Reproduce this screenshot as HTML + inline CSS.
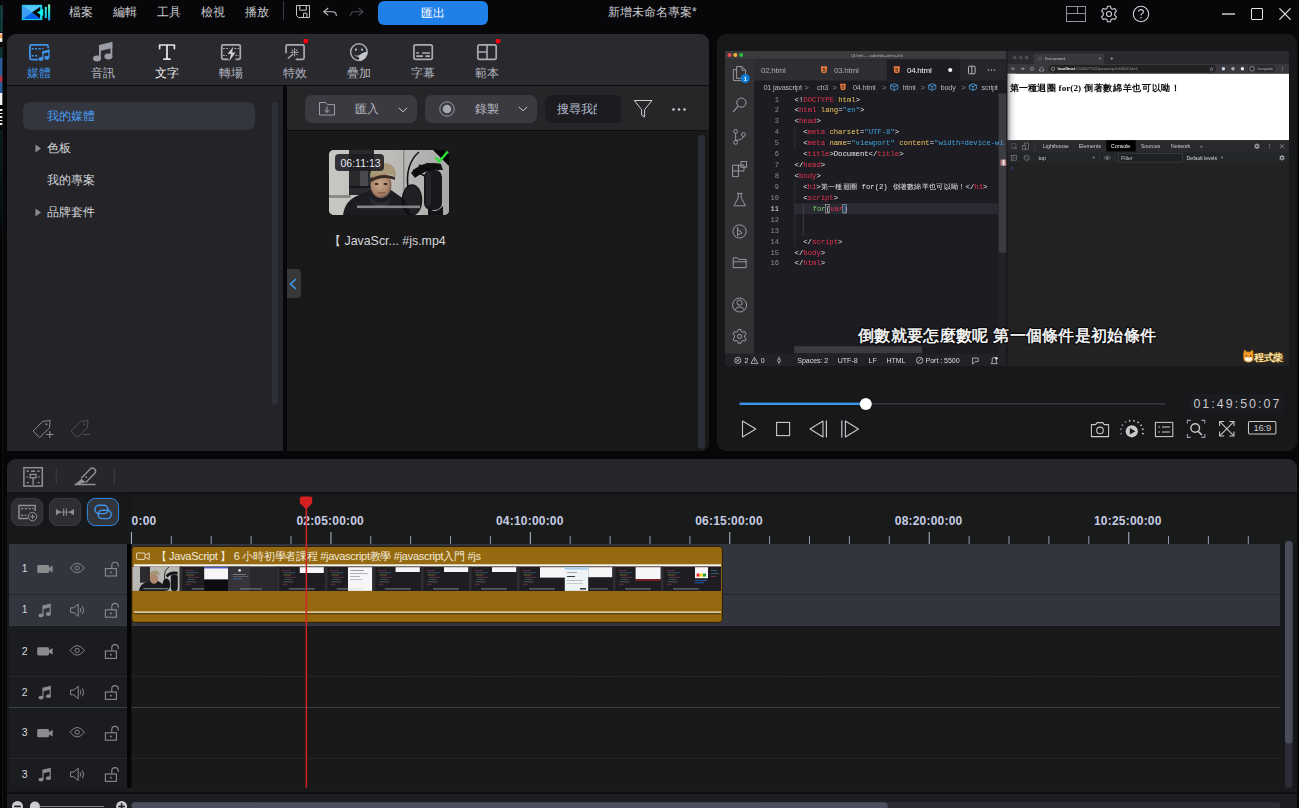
<!DOCTYPE html>
<html lang="zh-Hant">
<head>
<meta charset="utf-8">
<title>PowerDirector</title>
<style>
*{box-sizing:border-box;margin:0;padding:0}
html,body{width:1299px;height:808px;overflow:hidden;background:#070709}
body{position:relative;font-family:"Liberation Sans",sans-serif;color:#c8c9cf;font-size:12px}
.abs,.abs>*{position:absolute}
div,span,svg{position:absolute}
.t{white-space:nowrap;line-height:1}
/* panels */
#lp{left:7px;top:34px;width:702px;height:417px;background:#26262a;border-radius:9px 9px 8px 0;overflow:hidden}
#rp{left:717px;top:34px;width:580px;height:417px;background:#171819;border-radius:9px;overflow:hidden}
#tl{left:7px;top:459px;width:1290px;height:349px;background:#1a1a1a;border-radius:9px 9px 0 0;overflow:hidden}
</style>
</head>
<body>
<!-- left desktop sliver -->
<div id="sliver" style="left:0;top:0;width:3px;height:808px;background:#020203;overflow:hidden">
  <div style="left:0;top:5px;width:3px;height:27px;background:linear-gradient(90deg,#0a2c2e,#0f4a48 70%,#1d5a78)"></div>
  <div style="left:2px;top:9px;width:1px;height:11px;background:#3a7ac0"></div>
  <div style="left:0;top:33px;width:3px;height:9px;background:linear-gradient(180deg,#f0e8e0,#e88a28 45%,#fff 70%,#d8d8d8)"></div>
  <div style="left:0;top:47px;width:3px;height:11px;background:#0a3532"></div>
  <div style="left:0;top:58px;width:3px;height:35px;background:#2a5c9a"></div>
  <div style="left:0;top:71px;width:3px;height:15px;background:linear-gradient(165deg,#2a5c9a 25%,#c63038 45%,#c63038 62%,#2a5c9a 80%)"></div>
  <div style="left:0;top:93px;width:3px;height:12px;background:#f4f4f4"></div>
  <div style="left:0;top:109px;width:3px;height:18px;background:repeating-linear-gradient(180deg,#f0f0f0 0 1.6px,#0a0a0a 1.6px 3.6px)"></div>
  <div style="left:0;top:130px;width:3px;height:110px;background:linear-gradient(180deg,#071c1b,#041110 70%,#020203)"></div>
</div>
<div style="left:2.4px;top:0;width:1px;height:808px;background:#18181a;opacity:0.7"></div>

<!-- ============ TOP BAR ============ -->
<div id="topbar" style="left:0;top:0;width:1299px;height:34px">
  <!-- logo -->
  <svg style="left:20px;top:3px" width="32" height="19" viewBox="20 3 32 19">
    <defs>
      <linearGradient id="lg1" x1="0" y1="0" x2="0" y2="1"><stop offset="0" stop-color="#7ff0a0"/><stop offset="0.5" stop-color="#22d6d0"/><stop offset="1" stop-color="#1a9af0"/></linearGradient>
      <linearGradient id="lg2" x1="0" y1="0" x2="0" y2="1"><stop offset="0" stop-color="#2ff0d8"/><stop offset="1" stop-color="#14c0f0"/></linearGradient>
    </defs>
    <rect x="21.8" y="4.8" width="20.4" height="15.3" fill="#1ccdea"/>
    <path d="M22.4 5.4 H41.6 L32 12.4Z" fill="#55c8f7"/>
    <path d="M22.4 5.4 L32 12.4 L22.4 19.2Z" fill="#3f9cf4"/>
    <path d="M23 19 L32 12.6 L41.4 19Z" fill="#0560ec"/>
    <path d="M32 12.5 L40.2 6.8 V18.4Z" fill="#050507"/>
    <path d="M37 12.5 L43.2 8.8 V16.2Z" fill="#06f2ee"/>
    <path d="M40.2 15 L42.2 16 V19.4 H40.2Z" fill="#22d8e8"/>
    <rect x="44.8" y="6.8" width="2" height="11.2" fill="url(#lg2)"/>
    <rect x="48" y="4.4" width="2.2" height="16" fill="url(#lg1)"/>
  </svg>
  <!-- save -->
  <svg style="left:295px;top:4px" width="16" height="15" viewBox="295 4 16 15">
    <path d="M296.5 5.5 H309.5 V17.5 H298.5 L296.5 15.5Z" fill="none" stroke="#c4c4c6" stroke-width="1"/>
    <path d="M299.8 5.5 V10.2 H306.3 V5.5" fill="none" stroke="#c4c4c6" stroke-width="1"/>
    <path d="M303.5 17.5 V13.2 H306.9 V17.5" fill="none" stroke="#c4c4c6" stroke-width="1"/>
  </svg>
  <!-- undo -->
  <svg style="left:322px;top:6px" width="16" height="12" viewBox="322 6 16 12">
    <path d="M328.2 8 L323.8 11.7 L328.2 15.4 M323.8 11.7 H332.5 Q336.4 11.7 336.4 16" fill="none" stroke="#c0c0c3" stroke-width="1.1"/>
  </svg>
  <!-- redo -->
  <svg style="left:349px;top:6px" width="16" height="12" viewBox="349 6 16 12">
    <path d="M358.6 8 L363 11.7 L358.6 15.4 M363 11.7 H354.3 Q350.4 11.7 350.4 16" fill="none" stroke="#4a4a4e" stroke-width="1.1"/>
  </svg>
  <!-- layout -->
  <svg style="left:1065px;top:5px" width="22" height="18" viewBox="1065 5 22 18">
    <rect x="1066.5" y="6.5" width="19" height="15" fill="none" stroke="#8f9097" stroke-width="1"/>
    <path d="M1066.5 13.5 H1085.5 M1077.5 6.5 V13.5" stroke="#8f9097" stroke-width="1" fill="none"/>
  </svg>
  <!-- gear -->
  <svg style="left:1100px;top:5px" width="18" height="18" viewBox="-9 -9 18 18">
    <path id="gearp" fill="none" stroke="#d2d2d6" stroke-width="1.1" stroke-linejoin="round" d="M-1.5 -7.8 H1.5 L2 -5.6 L3.7 -4.7 L5.9 -5.5 L7.4 -2.9 L5.8 -1.3 V1.3 L7.4 2.9 L5.9 5.5 L3.7 4.7 L2 5.6 L1.5 7.8 H-1.5 L-2 5.6 L-3.7 4.7 L-5.9 5.5 L-7.4 2.9 L-5.8 1.3 V-1.3 L-7.4 -2.9 L-5.9 -5.5 L-3.7 -4.7 L-2 -5.6Z"/>
    <circle cx="0" cy="0" r="2.5" fill="none" stroke="#d2d2d6" stroke-width="1.1"/>
  </svg>
  <!-- help -->
  <svg style="left:1132px;top:5px" width="18" height="18" viewBox="-9 -9 18 18">
    <circle cx="0" cy="0" r="7.7" fill="none" stroke="#d2d2d6" stroke-width="1.1"/>
    <path d="M-2.4 -2.2 Q-2.4 -4.4 0 -4.4 Q2.4 -4.4 2.4 -2.3 Q2.4 -0.9 0.9 -0.2 Q0 0.3 0 1.6" fill="none" stroke="#d2d2d6" stroke-width="1.1"/>
    <circle cx="0" cy="3.7" r="0.8" fill="#d2d2d6"/>
  </svg>
  <!-- window controls -->
  <div style="left:1222px;top:13px;width:13px;height:1.5px;background:#9a9a9c"></div>
  <div style="left:1251px;top:8px;width:12px;height:12px;border:1.3px solid #e6e6e6;border-radius:1px"></div>
  <svg style="left:1278px;top:7px" width="14" height="14" viewBox="0 0 14 14"><path d="M1.4 1.4 L12.6 12.6 M12.6 1.4 L1.4 12.6" stroke="#e6e6e6" stroke-width="1.2"/></svg>
  <div class="t" style="left:69px;top:6px;font-size:12px;color:#c9cad0">檔案</div>
  <div class="t" style="left:113px;top:6px;font-size:12px;color:#c9cad0">編輯</div>
  <div class="t" style="left:157px;top:6px;font-size:12px;color:#c9cad0">工具</div>
  <div class="t" style="left:201px;top:6px;font-size:12px;color:#c9cad0">檢視</div>
  <div class="t" style="left:245px;top:6px;font-size:12px;color:#c9cad0">播放</div>
  <div style="left:283px;top:1px;width:1px;height:19px;background:#3a3b40"></div>
  <div id="export" style="left:378px;top:1px;width:110px;height:24px;border-radius:6px;background:#1f80e8"></div>
  <div class="t" style="left:421px;top:6.5px;font-size:12px;color:#fff">匯出</div>
  <div class="t" style="left:608px;top:6px;font-size:12px;color:#c9cad0">新增未命名專案*</div>
</div>

<!-- ============ LEFT PANEL ============ -->
<div id="lp">
  <!-- tab row -->
  <div id="tabs" style="left:0;top:0;width:702px;height:52px;background:#2a2a2e"></div>
  <!-- tab: media (active) ; coordinates are panel-relative: panel x0=7,y0=34 -->
  <svg style="left:20px;top:8px" width="24" height="22" viewBox="27 42 24 22">
    <path d="M37.2 59.6 H31.4 Q29.9 59.6 29.9 58.1 V46.3 Q29.9 44.8 31.4 44.8 H46.6 Q48.1 44.8 48.1 46.3 V47.6" fill="none" stroke="#3d95ea" stroke-width="1.8" stroke-linecap="round"/>
    <path d="M31.6 48.7 H43.4" stroke="#3d95ea" stroke-width="1.4" stroke-dasharray="2.2 1.3" fill="none"/>
    <path d="M31.6 55.7 H38.6" stroke="#3d95ea" stroke-width="1.4" stroke-dasharray="2.2 1.3" fill="none"/>
    <path d="M42.9 58.6 V52 L48.9 50.4 V57.4" fill="none" stroke="#3d95ea" stroke-width="1.3"/>
    <path d="M42.25 51.4 L49.55 49.5 V52.1 L42.25 54Z" fill="#3d95ea"/>
    <ellipse cx="40.9" cy="59" rx="2.5" ry="2.1" fill="#3d95ea"/>
    <ellipse cx="46.9" cy="57.8" rx="2.5" ry="2.1" fill="#3d95ea"/>
  </svg>
  <div class="t" style="left:20px;top:33px;width:24px;text-align:center;font-size:12px;color:#3d95ea">媒體</div>
  <!-- tab: audio -->
  <svg style="left:84px;top:6px" width="24" height="24" viewBox="91 40 24 24">
    <path d="M99 45.2 L112.3 42 V57.2 H110.4 V47.6 L100.9 49.8 V59.4 H99Z" fill="#9a9ca6"/>
    <path d="M99 45.2 L112.3 42 V48 L99 51.2Z" fill="#9a9ca6"/>
    <ellipse cx="97" cy="58.6" rx="4" ry="3" fill="#9a9ca6"/>
    <ellipse cx="108.4" cy="56.4" rx="4" ry="3" fill="#9a9ca6"/>
  </svg>
  <div class="t" style="left:84px;top:33px;width:24px;text-align:center;font-size:12px;color:#b4b6c0">音訊</div>
  <!-- tab: text -->
  <svg style="left:148px;top:8px" width="24" height="22" viewBox="155 42 24 22">
    <path d="M159.6 48.6 V45 H174.4 V48.6" fill="none" stroke="#e4e4e8" stroke-width="1.7" stroke-linejoin="round" stroke-linecap="round"/>
    <path d="M167 45 V59.2" stroke="#e4e4e8" stroke-width="1.8" fill="none"/>
    <path d="M164 59.2 H170" stroke="#e4e4e8" stroke-width="1.8" stroke-linecap="round" fill="none"/>
  </svg>
  <div class="t" style="left:148px;top:33px;width:24px;text-align:center;font-size:12px;color:#f2f2f4">文字</div>
  <!-- tab: transition -->
  <svg style="left:212px;top:8px" width="24" height="22" viewBox="219 42 24 22">
    <path d="M228.5 59.3 H223.2 Q221.7 59.3 221.7 57.8 V46.3 Q221.7 44.8 223.2 44.8 H238.8 Q240.3 44.8 240.3 46.3 V57.8 Q240.3 59.3 238.8 59.3 H235.5" fill="none" stroke="#a9abb5" stroke-width="1.7"/>
    <path d="M223 48.5 H229.5 M234.5 48.5 H239" stroke="#a9abb5" stroke-width="1.1" stroke-dasharray="1.8 1.3" fill="none"/>
    <path d="M223 55.5 H227 M235.5 55.5 H239" stroke="#a9abb5" stroke-width="1.1" stroke-dasharray="1.8 1.3" fill="none"/>
    <path d="M233.4 46.6 L227.6 54 H231 L229 61.6 L235.6 52.4 H232Z" fill="#c9cbd3"/>
  </svg>
  <div class="t" style="left:212px;top:33px;width:24px;text-align:center;font-size:12px;color:#b4b6c0">轉場</div>
  <!-- tab: effects -->
  <svg style="left:276px;top:4px" width="26" height="26" viewBox="283 38 26 26">
    <path d="M286 52.5 V46.3 Q286 44.8 287.5 44.8 H302.6 Q304.1 44.8 304.1 46.3 V57.8 Q304.1 59.3 302.6 59.3 H296.3" fill="none" stroke="#a9abb5" stroke-width="1.7" stroke-linecap="round"/>
    <path d="M288.3 58.3 L292.8 54.2" stroke="#a9abb5" stroke-width="1.5" stroke-linecap="round"/>
    <path d="M294.6 48.6 V50.2 M294.6 54.4 V56 M291 52.3 H292.6 M296.6 52.3 H298.2 M292 49.7 L293.1 50.8 M297.2 49.7 L296.1 50.8 M297.2 54.9 L296.1 53.8" stroke="#c6c8d0" stroke-width="0.9" stroke-linecap="round"/>
    <circle cx="294.6" cy="52.3" r="1.1" fill="#c6c8d0"/>
    <rect x="303.6" y="39" width="4.4" height="4.2" rx="1.2" fill="#fb0007"/>
  </svg>
  <div class="t" style="left:276px;top:33px;width:24px;text-align:center;font-size:12px;color:#b4b6c0">特效</div>
  <!-- tab: overlay -->
  <svg style="left:340px;top:6px" width="24" height="24" viewBox="347 40 24 24">
    <circle cx="358.9" cy="52.1" r="8.3" fill="none" stroke="#a9abb5" stroke-width="1.5"/>
    <path d="M353.4 54.8 Q357.6 57.4 361.6 53.6 Q364.6 51.6 367.4 51.4 Q367.4 57.4 361.2 60.4 Q359.6 61 358.6 60.6 Q360.2 58 358.2 56.8 Q355.4 56.8 353.4 54.8Z" fill="#c3c5cf"/>
    <rect x="355" y="48.6" width="1.8" height="2" fill="#c3c5cf"/>
    <rect x="361" y="48.6" width="1.8" height="2" fill="#c3c5cf"/>
  </svg>
  <div class="t" style="left:340px;top:33px;width:24px;text-align:center;font-size:12px;color:#b4b6c0">疊加</div>
  <!-- tab: subtitle -->
  <svg style="left:404px;top:8px" width="24" height="22" viewBox="411 42 24 22">
    <rect x="413.9" y="44.8" width="18.4" height="14.5" rx="1.8" fill="none" stroke="#a9abb5" stroke-width="1.7"/>
    <path d="M416.2 53 H419 M422 53 H430 M416.2 56.1 H423 M425.4 56.1 H430" stroke="#a9abb5" stroke-width="1.7" fill="none"/>
  </svg>
  <div class="t" style="left:404px;top:33px;width:24px;text-align:center;font-size:12px;color:#b4b6c0">字幕</div>
  <!-- tab: template -->
  <svg style="left:468px;top:4px" width="26" height="26" viewBox="475 38 26 26">
    <rect x="477.8" y="44.8" width="18.4" height="14.5" rx="1.8" fill="none" stroke="#a9abb5" stroke-width="1.7"/>
    <path d="M487 44.8 V59.3 M477.8 52 H487" stroke="#a9abb5" stroke-width="1.6" fill="none"/>
    <rect x="495.8" y="39" width="4.4" height="4.2" rx="1.2" fill="#fb0007"/>
  </svg>
  <div class="t" style="left:468px;top:33px;width:24px;text-align:center;font-size:12px;color:#b4b6c0">範本</div>
  <div style="left:0;top:51.3px;width:702px;height:1.5px;background:#0b0b0d"></div>
  <!-- tree pane -->
  <div id="tree" style="left:0;top:52px;width:276px;height:366px;background:#242428"></div>
  <div style="left:16px;top:68px;width:232px;height:28px;border-radius:7px;background:#33353f"></div>
  <div class="t" style="left:40px;top:76px;font-size:12px;color:#4a9ff5">我的媒體</div>
  <div class="t" style="left:40px;top:108px;font-size:12px;color:#d4d5da">色板</div>
  <div class="t" style="left:40px;top:140px;font-size:12px;color:#d4d5da">我的專案</div>
  <div class="t" style="left:40px;top:172px;font-size:12px;color:#d4d5da">品牌套件</div>
  <svg style="left:28px;top:110px" width="7" height="9" viewBox="0 0 7 9"><path d="M0.5 0.5 L6 4.5 L0.5 8.5Z" fill="#8a8b92"/></svg>
  <svg style="left:28px;top:174px" width="7" height="9" viewBox="0 0 7 9"><path d="M0.5 0.5 L6 4.5 L0.5 8.5Z" fill="#8a8b92"/></svg>
  <div style="left:264.7px;top:68px;width:6.8px;height:303px;border-radius:3.4px;background:#2d2f39"></div>
  <!-- tag icons (page coords -> panel coords via viewBox) -->
  <svg style="left:24px;top:384px" width="62" height="22" viewBox="31 418 62 22">
    <path d="M33.2 431 L42.6 421.5 L50.1 420.4 L49.5 427.9 L39.6 437.6 Z" fill="none" stroke="#8a8a8d" stroke-width="1" stroke-linejoin="round"/>
    <circle cx="46.4" cy="424.2" r="0.95" fill="#8a8a8d"/>
    <path d="M46.2 434.5 H53.4 M49.8 430.9 V438.1" stroke="#8a8a8d" stroke-width="1.1"/>
    <path d="M71.1 431 L80.5 421.5 L88 420.4 L87.4 427.9 L77.5 437.6 Z" fill="none" stroke="#505054" stroke-width="1" stroke-linejoin="round"/>
    <circle cx="84.3" cy="424.2" r="0.95" fill="#505054"/>
    <path d="M83.2 434.5 H90.3" stroke="#505054" stroke-width="1"/>
  </svg>
  <!-- divider -->
  <div style="left:276px;top:52px;width:4px;height:366px;background:#070709"></div>
  <!-- content pane -->
  <div id="ctool" style="left:280px;top:52px;width:422px;height:45px;background:#262629"></div>
  <div style="left:280px;top:96.4px;width:422px;height:1.2px;background:#0d0d0f"></div>
  <div id="cbody" style="left:280px;top:97px;width:422px;height:321px;background:#191919"></div>
  <div id="btn-import" style="left:298px;top:61px;width:112px;height:28px;border-radius:7px;background:#3a3a40"></div>
  <svg style="left:311px;top:67px" width="18" height="16" viewBox="318 101 18 16">
    <path d="M319.5 115 V102.5 H325.6 L327.3 104.6 H334.5 V115Z" fill="none" stroke="#9b9ca5" stroke-width="1"/>
    <path d="M327 106.6 V112.3 M324.4 109.9 L327 112.4 L329.6 109.9" fill="none" stroke="#a4a5ae" stroke-width="1"/>
  </svg>
  <div class="t" style="left:348px;top:69px;font-size:12px;color:#b5b6bd">匯入</div>
  <svg style="left:391px;top:72.6px" width="10" height="6" viewBox="0 0 10 6"><path d="M0.8 0.8 L5 4.8 L9.2 0.8" fill="none" stroke="#c6c6ca" stroke-width="1"/></svg>
  <div id="btn-rec" style="left:418px;top:61px;width:112px;height:28px;border-radius:7px;background:#3a3a40"></div>
  <svg style="left:432px;top:67px" width="16" height="16" viewBox="-8 -8 16 16"><circle r="7.2" fill="none" stroke="#9fa0aa" stroke-width="0.9"/><circle r="4.3" fill="#a4a6b0"/></svg>
  <div class="t" style="left:468px;top:69px;font-size:12px;color:#b5b6bd">錄製</div>
  <svg style="left:511px;top:72.4px" width="10" height="6" viewBox="0 0 10 6"><path d="M0.8 0.8 L5 4.8 L9.2 0.8" fill="none" stroke="#c6c6ca" stroke-width="1"/></svg>
  <div id="search" style="left:538px;top:61px;width:76px;height:28px;border-radius:8px 4px 4px 8px;background:#1b1b20;overflow:hidden"><div class="t" style="left:12px;top:8px;font-size:12px;color:#b9bfcf;width:40px;overflow:hidden">搜尋我的媒體</div></div>
  <svg style="left:626px;top:65px" width="20" height="20" viewBox="633 99 20 20">
    <path d="M634.3 100.5 H652 L644.6 109.6 V117 L641.6 115 V109.6Z" fill="none" stroke="#cfcfd2" stroke-width="1"/>
  </svg>
  <svg style="left:664px;top:73px" width="16" height="5" viewBox="671 107 16 5"><circle cx="673.5" cy="109.5" r="1.3" fill="#c8c8cc"/><circle cx="679" cy="109.5" r="1.3" fill="#c8c8cc"/><circle cx="684.5" cy="109.5" r="1.3" fill="#c8c8cc"/></svg>
  <!-- scrollbar -->
  <div style="left:690.5px;top:101px;width:7.2px;height:314px;border-radius:3.6px;background:#2a2c36"></div>
  <!-- collapse handle -->
  <div style="left:280px;top:235px;width:14px;height:29px;border-radius:0 4px 4px 0;background:#383838"></div>
  <svg style="left:282px;top:244px" width="9" height="12" viewBox="0 0 9 12"><path d="M7 1 L1.5 6 L7 11" fill="none" stroke="#3d9ff5" stroke-width="1.5"/></svg>
  <!-- thumbnail -->
  <div id="thumb" style="left:322px;top:116px;width:120px;height:65px;border-radius:5px;background:#bdbcb8;overflow:hidden">
    <svg style="left:0;top:0" width="120" height="65" viewBox="0 0 120 65">
      <defs>
        <linearGradient id="wall" x1="0" y1="0" x2="1" y2="0"><stop offset="0" stop-color="#c8c7c4"/><stop offset="0.5" stop-color="#bdbcb9"/><stop offset="1" stop-color="#a9a9a8"/></linearGradient>
        <radialGradient id="face" cx="0.45" cy="0.45" r="0.6"><stop offset="0" stop-color="#c7a48c"/><stop offset="0.7" stop-color="#a98468"/><stop offset="1" stop-color="#6b5040"/></radialGradient>
      </defs>
      <rect width="120" height="65" fill="url(#wall)"/>
      <rect x="20" y="0" width="25" height="45" fill="#2a2a2c"/>
      <rect x="31" y="20" width="8" height="17" fill="#4a4b4e"/>
      <rect x="20" y="36" width="25" height="2" fill="#16161a"/>
      <rect x="0" y="45" width="22" height="3" fill="#8c8b88"/>
      <rect x="74" y="0" width="1.5" height="40" fill="#8a8a8a"/>
      <!-- body -->
      <path d="M14 65 Q16 50 30 45 L42 40 H62 L72 47 Q80 52 82 65Z" fill="#1c1d22"/>
      <path d="M40 47 Q52 58 62 47 L60 54 Q52 60 43 54Z" fill="#2b2c33"/>
      <!-- head -->
      <ellipse cx="52" cy="35" rx="10.5" ry="13" fill="url(#face)"/>
      <path d="M41 28 Q41 13 54 13 Q66 13 67 24 L67 27 Q55 20 41 28Z" fill="#a89978"/>
      <path d="M42 29 Q52 22 66 27 L66 30 Q54 25 42 32Z" fill="#3a2c22"/>
      <ellipse cx="47.5" cy="34" rx="2" ry="1" fill="#2c1d16"/>
      <ellipse cx="56.5" cy="34" rx="2" ry="1" fill="#2c1d16"/>
      <path d="M49 42.5 Q52 44 56 42.2" stroke="#7a4a3c" stroke-width="1.2" fill="none"/>
      <!-- pop filter -->
      <ellipse cx="83" cy="50" rx="9.5" ry="15" fill="#15161a" stroke="#0b0b0d" stroke-width="1.5" opacity="0.93"/>
      <path d="M79 38 Q76 14 90 2" stroke="#121214" stroke-width="1.6" fill="none"/>
      <!-- mic -->
      <path d="M82 23 Q92 10 112 14 L114 20 Q96 18 86 28Z" fill="#111114"/>
      <path d="M84 20 L96 26 M90 15 L104 22 M98 13 L110 20 M86 26 L110 14" stroke="#0c0c0e" stroke-width="1.4" fill="none"/>
      <rect x="95" y="20" width="18" height="40" rx="7" fill="#17181c"/>
      <rect x="97" y="22" width="5" height="34" rx="2.5" fill="#24262c"/>
      <path d="M99 56 Q105 66 114 56 V65 H99Z" fill="#121316"/>
      <rect x="114" y="22" width="6" height="43" fill="#a7a8a8"/>
      <!-- subtitle strip -->
      <rect x="28" y="55.5" width="63" height="2.6" fill="#d8d8d8" opacity="0.55"/>
      <!-- corner + check -->
      <path d="M104 0 H120 V16Z" fill="#050506"/>
      <path d="M106.5 7.6 L110.4 11.4 L118.8 1.4" stroke="#2be03a" stroke-width="2.4" fill="none"/>
    </svg>
    <div style="left:6px;top:4px;width:49px;height:17px;border-radius:4px;background:rgba(28,29,33,0.88)"></div>
    <div class="t" style="left:11.5px;top:7.5px;font-size:10.5px;color:#e4e8f2">06:11:13</div>
  </div>
  <div class="t" style="left:322px;top:200.5px;font-size:12.4px;color:#d4d5da">【 JavaScr... #js.mp4</div>
</div>

<!-- ============ RIGHT PANEL (preview) ============ -->
<div id="rp">
<svg id="video" style="left:8px;top:17px" width="564" height="315" viewBox="725 51 564 315" font-family="Liberation Sans, sans-serif">
<defs>
<linearGradient id="pgsh" x1="0" y1="0" x2="1" y2="0"><stop offset="0" stop-color="#8d8d90"/><stop offset="0.5" stop-color="#e6e6e8"/><stop offset="1" stop-color="#ffffff"/></linearGradient>
<filter id="blur1" x="-5%" y="-5%" width="110%" height="110%"><feGaussianBlur stdDeviation="0.35"/></filter>
</defs>
<g filter="url(#blur1)">
<rect x="725" y="51" width="282" height="315" fill="#1f1f23"/>
<rect x="725" y="51" width="282" height="8.3" fill="#3a3a3d"/>
<circle cx="729.5" cy="55.1" r="2" fill="#ee4b4b"/>
<circle cx="735.3" cy="55.1" r="2" fill="#f5b02e"/>
<circle cx="741.2" cy="55.1" r="2" fill="#2fbf3f"/>
<text x="877" y="56.6" font-size="3.6" fill="#b8b8b8" text-anchor="middle">04.html — codeshiba-demo-ch3</text>
<rect x="725" y="59.3" width="29" height="294.5" fill="#333336"/>
<rect x="754" y="59.3" width="253" height="21.2" fill="#27272a"/>
<rect x="754" y="59.3" width="60.3" height="21.2" fill="#2e2e31"/>
<rect x="814.8" y="59.3" width="72" height="21.2" fill="#2e2e31"/>
<rect x="887.2" y="59.3" width="72.6" height="21.2" fill="#1f1f23"/>
<text x="761" y="72.8" font-size="8" fill="#a9a9ad" letter-spacing="-0.25">02.html</text>
<text x="834" y="72.8" font-size="8" fill="#a9a9ad" letter-spacing="-0.25">03.html</text>
<text x="907" y="72.8" font-size="8" fill="#f2f2f2" letter-spacing="-0.25">04.html</text>
<path d="M820.8 66.2 h6.4 l-0.6 6.2 l-2.6 0.9 l-2.6 -0.9 Z" fill="#e8783a"/><text x="824.0" y="71.8" font-size="5.4" font-weight="bold" fill="#2a2a2c" text-anchor="middle">5</text>
<path d="M893.6 66.2 h6.4 l-0.6 6.2 l-2.6 0.9 l-2.6 -0.9 Z" fill="#e8783a"/><text x="896.8" y="71.8" font-size="5.4" font-weight="bold" fill="#2a2a2c" text-anchor="middle">5</text>
<circle cx="950.2" cy="70" r="2.1" fill="#f4f4f4"/>
<rect x="968.5" y="66.2" width="6.6" height="7.6" rx="1" fill="none" stroke="#c8c8cc" stroke-width="0.9"/><path d="M971.8 66.2 V73.8" stroke="#c8c8cc" stroke-width="0.9"/>
<circle cx="988.4" cy="70" r="0.8" fill="#b0b0b4"/>
<circle cx="991.4" cy="70" r="0.8" fill="#b0b0b4"/>
<circle cx="994.4" cy="70" r="0.8" fill="#b0b0b4"/>
<text x="763.5" y="90" font-size="7.4" fill="#b4b4b8" letter-spacing="-0.25">01 javascript</text>
<text x="804.6" y="90" font-size="7.4" fill="#8a8a8e" letter-spacing="-0.25">&gt;</text>
<text x="817.0" y="90" font-size="7.4" fill="#b4b4b8" letter-spacing="-0.25">ch3</text>
<text x="832.6" y="90" font-size="7.4" fill="#8a8a8e" letter-spacing="-0.25">&gt;</text>
<text x="853.0" y="90" font-size="7.4" fill="#b4b4b8" letter-spacing="-0.25">04.html</text>
<text x="882.0" y="90" font-size="7.4" fill="#8a8a8e" letter-spacing="-0.25">&gt;</text>
<text x="902.5" y="90" font-size="7.4" fill="#b4b4b8" letter-spacing="-0.25">html</text>
<text x="920.8" y="90" font-size="7.4" fill="#8a8a8e" letter-spacing="-0.25">&gt;</text>
<text x="940.6" y="90" font-size="7.4" fill="#b4b4b8" letter-spacing="-0.25">body</text>
<text x="961.2" y="90" font-size="7.4" fill="#8a8a8e" letter-spacing="-0.25">&gt;</text>
<text x="981.5" y="90" font-size="7.4" fill="#b4b4b8" letter-spacing="-0.25">script</text>
<path d="M840.0 83.8 h5.8 l-0.5 5.6 l-2.3 0.8 l-2.3 -0.8 Z" fill="#e8783a"/><text x="842.9" y="88.8" font-size="4.9" font-weight="bold" fill="#2a2a2c" text-anchor="middle">5</text>
<path d="M890.6 85.2 l3.6 -1.5 l3.6 1.5 v3.6 l-3.6 1.6 l-3.6 -1.6 Z M890.6 85.2 l3.6 1.5 l3.6 -1.5 M894.2 86.7 v3.7" fill="none" stroke="#4aa0e0" stroke-width="0.8"/>
<path d="M928.6 85.2 l3.6 -1.5 l3.6 1.5 v3.6 l-3.6 1.6 l-3.6 -1.6 Z M928.6 85.2 l3.6 1.5 l3.6 -1.5 M932.2 86.7 v3.7" fill="none" stroke="#4aa0e0" stroke-width="0.8"/>
<path d="M969.4 85.2 l3.6 -1.5 l3.6 1.5 v3.6 l-3.6 1.6 l-3.6 -1.6 Z M969.4 85.2 l3.6 1.5 l3.6 -1.5 M973.0 86.7 v3.7" fill="none" stroke="#4aa0e0" stroke-width="0.8"/>
<rect x="794.5" y="203.4" width="204" height="10.6" fill="#2b2b33"/>
<rect x="998.6" y="93.5" width="8.4" height="260" fill="#232327"/>
<rect x="998.6" y="93.5" width="8.4" height="159" fill="#3a3a3f"/>
<rect x="1000.4" y="159.6" width="6.6" height="6" fill="#d08a8a" opacity="0.8"/><rect x="1002.6" y="159.6" width="2" height="6" fill="#e8e8e8"/>
<path d="M794.8 126 V148 M794.8 180 V246.5" stroke="#3d3d42" stroke-width="0.6"/>
<path d="M803.4 203 V235.5" stroke="#4a4a50" stroke-width="0.6"/>
<text x="779" y="101.5" font-size="7" fill="#8b8b90" text-anchor="end" font-family="Liberation Mono, monospace">1</text>
<text x="794.6" y="101.5" font-size="7.27" xml:space="preserve" font-family="Liberation Mono, monospace"><tspan fill="#e8e8ea">&lt;!</tspan><tspan fill="#e5304f">DOCTYPE</tspan><tspan fill="#ecc35f"> html</tspan><tspan fill="#e8e8ea">&gt;</tspan></text>
<text x="779" y="112.4" font-size="7" fill="#8b8b90" text-anchor="end" font-family="Liberation Mono, monospace">2</text>
<text x="794.6" y="112.4" font-size="7.27" xml:space="preserve" font-family="Liberation Mono, monospace"><tspan fill="#e8e8ea">&lt;</tspan><tspan fill="#e5304f">html</tspan><tspan fill="#ecc35f"> lang</tspan><tspan fill="#e8e8ea">=</tspan><tspan fill="#3fa3e0">"en"</tspan><tspan fill="#e8e8ea">&gt;</tspan></text>
<text x="779" y="123.4" font-size="7" fill="#8b8b90" text-anchor="end" font-family="Liberation Mono, monospace">3</text>
<text x="794.6" y="123.4" font-size="7.27" xml:space="preserve" font-family="Liberation Mono, monospace"><tspan fill="#e8e8ea">&lt;</tspan><tspan fill="#e5304f">head</tspan><tspan fill="#e8e8ea">&gt;</tspan></text>
<text x="779" y="134.3" font-size="7" fill="#8b8b90" text-anchor="end" font-family="Liberation Mono, monospace">4</text>
<text x="803.2" y="134.3" font-size="7.27" xml:space="preserve" font-family="Liberation Mono, monospace"><tspan fill="#e8e8ea">&lt;</tspan><tspan fill="#e5304f">meta</tspan><tspan fill="#ecc35f"> charset</tspan><tspan fill="#e8e8ea">=</tspan><tspan fill="#3fa3e0">"UTF-8"</tspan><tspan fill="#e8e8ea">&gt;</tspan></text>
<text x="779" y="145.2" font-size="7" fill="#8b8b90" text-anchor="end" font-family="Liberation Mono, monospace">5</text>
<text x="803.2" y="145.2" font-size="7.27" xml:space="preserve" font-family="Liberation Mono, monospace"><tspan fill="#e8e8ea">&lt;</tspan><tspan fill="#e5304f">meta</tspan><tspan fill="#ecc35f"> name</tspan><tspan fill="#e8e8ea">=</tspan><tspan fill="#3fa3e0">"viewport"</tspan><tspan fill="#ecc35f"> content</tspan><tspan fill="#e8e8ea">=</tspan><tspan fill="#3fa3e0">"width=device-wi</tspan></text>
<text x="779" y="156.2" font-size="7" fill="#8b8b90" text-anchor="end" font-family="Liberation Mono, monospace">6</text>
<text x="803.2" y="156.2" font-size="7.27" xml:space="preserve" font-family="Liberation Mono, monospace"><tspan fill="#e8e8ea">&lt;</tspan><tspan fill="#e5304f">title</tspan><tspan fill="#e8e8ea">&gt;Document&lt;/</tspan><tspan fill="#e5304f">title</tspan><tspan fill="#e8e8ea">&gt;</tspan></text>
<text x="779" y="167.1" font-size="7" fill="#8b8b90" text-anchor="end" font-family="Liberation Mono, monospace">7</text>
<text x="794.6" y="167.1" font-size="7.27" xml:space="preserve" font-family="Liberation Mono, monospace"><tspan fill="#e8e8ea">&lt;/</tspan><tspan fill="#e5304f">head</tspan><tspan fill="#e8e8ea">&gt;</tspan></text>
<text x="779" y="178.0" font-size="7" fill="#8b8b90" text-anchor="end" font-family="Liberation Mono, monospace">8</text>
<text x="794.6" y="178.0" font-size="7.27" xml:space="preserve" font-family="Liberation Mono, monospace"><tspan fill="#e8e8ea">&lt;</tspan><tspan fill="#e5304f">body</tspan><tspan fill="#e8e8ea">&gt;</tspan></text>
<text x="779" y="188.9" font-size="7" fill="#8b8b90" text-anchor="end" font-family="Liberation Mono, monospace">9</text>
<text x="803.2" y="188.9" font-size="7.27" xml:space="preserve" font-family="Liberation Mono, monospace"><tspan fill="#e8e8ea">&lt;</tspan><tspan fill="#e5304f">h1</tspan><tspan fill="#e8e8ea">&gt;</tspan></text>
<text x="779" y="199.9" font-size="7" fill="#8b8b90" text-anchor="end" font-family="Liberation Mono, monospace">10</text>
<text x="803.2" y="199.9" font-size="7.27" xml:space="preserve" font-family="Liberation Mono, monospace"><tspan fill="#e8e8ea">&lt;</tspan><tspan fill="#e5304f">script</tspan><tspan fill="#e8e8ea">&gt;</tspan></text>
<text x="779" y="210.8" font-size="7" fill="#e0e0e0" text-anchor="end" font-family="Liberation Mono, monospace">11</text>
<text x="812.6" y="210.8" font-size="7.27" xml:space="preserve" font-family="Liberation Mono, monospace"><tspan fill="#7fd068">for</tspan><tspan fill="#e8e8ea">(</tspan><tspan fill="#e5304f" font-style="italic">var</tspan><tspan fill="#e8e8ea">)</tspan></text>
<text x="779" y="221.7" font-size="7" fill="#8b8b90" text-anchor="end" font-family="Liberation Mono, monospace">12</text>
<text x="779" y="232.7" font-size="7" fill="#8b8b90" text-anchor="end" font-family="Liberation Mono, monospace">13</text>
<text x="779" y="243.6" font-size="7" fill="#8b8b90" text-anchor="end" font-family="Liberation Mono, monospace">14</text>
<text x="803.2" y="243.6" font-size="7.27" xml:space="preserve" font-family="Liberation Mono, monospace"><tspan fill="#e8e8ea">&lt;/</tspan><tspan fill="#e5304f">script</tspan><tspan fill="#e8e8ea">&gt;</tspan></text>
<text x="779" y="254.5" font-size="7" fill="#8b8b90" text-anchor="end" font-family="Liberation Mono, monospace">15</text>
<text x="794.6" y="254.5" font-size="7.27" xml:space="preserve" font-family="Liberation Mono, monospace"><tspan fill="#e8e8ea">&lt;/</tspan><tspan fill="#e5304f">body</tspan><tspan fill="#e8e8ea">&gt;</tspan></text>
<text x="779" y="265.4" font-size="7" fill="#8b8b90" text-anchor="end" font-family="Liberation Mono, monospace">16</text>
<text x="794.6" y="265.4" font-size="7.27" xml:space="preserve" font-family="Liberation Mono, monospace"><tspan fill="#e8e8ea">&lt;/</tspan><tspan fill="#e5304f">html</tspan><tspan fill="#e8e8ea">&gt;</tspan></text>
<text x="820.8" y="188.9" font-size="7.27" fill="#e8e8ea" textLength="36.2" lengthAdjust="spacing">第一種迴圈</text>
<text x="857.2" y="188.9" font-size="7.27" fill="#e8e8ea" font-family="Liberation Mono, monospace" xml:space="preserve"> for(2) </text>
<text x="892.6" y="188.9" font-size="7.27" fill="#e8e8ea" textLength="72.6" lengthAdjust="spacing">倒著數綿羊也可以呦！</text>
<text x="965.6" y="188.9" font-size="7.27" font-family="Liberation Mono, monospace" xml:space="preserve"><tspan fill="#e8e8ea">&lt;/</tspan><tspan fill="#e5304f">h1</tspan><tspan fill="#e8e8ea">&gt;</tspan></text>
<rect x="825.6" y="204.6" width="3.6" height="8.4" fill="none" stroke="#c8c8cc" stroke-width="0.5"/>
<rect x="842.8" y="204.6" width="3.6" height="8.4" fill="#1c4f80" fill-opacity="0.55" stroke="#c8c8cc" stroke-width="0.5"/>
<rect x="794.2" y="346.3" width="128" height="6.8" fill="#3b3b40"/>
<rect x="725" y="353.6" width="282" height="12.4" fill="#222225"/>
<text x="744.5" y="362.9" font-size="7.05" fill="#dcdcdf" letter-spacing="-0.05">2</text>
<text x="760.8" y="362.9" font-size="7.05" fill="#dcdcdf" letter-spacing="-0.05">0</text>
<text x="797.3" y="362.9" font-size="7.05" fill="#dcdcdf" letter-spacing="-0.05">Spaces: 2</text>
<text x="837.8" y="362.9" font-size="7.05" fill="#dcdcdf" letter-spacing="-0.05">UTF-8</text>
<text x="868.6" y="362.9" font-size="7.05" fill="#dcdcdf" letter-spacing="-0.05">LF</text>
<text x="886.4" y="362.9" font-size="7.05" fill="#dcdcdf" letter-spacing="-0.05">HTML</text>
<text x="925.6" y="362.9" font-size="7.05" fill="#dcdcdf" letter-spacing="-0.05">Port : 5500</text>
<circle cx="737.8" cy="360.4" r="3.1" fill="none" stroke="#dcdcdf" stroke-width="0.7"/><path d="M736.2 358.8 l3.2 3.2 m0 -3.2 l-3.2 3.2" stroke="#dcdcdf" stroke-width="0.7"/>
<path d="M754.4 357.2 l3.4 6.2 h-6.8 Z" fill="none" stroke="#dcdcdf" stroke-width="0.7"/><path d="M754.4 359.4 v2" stroke="#dcdcdf" stroke-width="0.7"/>
<circle cx="779" cy="360.4" r="1.5" fill="none" stroke="#dcdcdf" stroke-width="0.7"/><path d="M779 356.6 v2.3 m0 3 v2.3" stroke="#dcdcdf" stroke-width="0.7"/>
<circle cx="919.6" cy="360.4" r="3.2" fill="none" stroke="#dcdcdf" stroke-width="0.7"/><path d="M917.4 362.6 l4.4 -4.4" stroke="#dcdcdf" stroke-width="0.7"/>
<path d="M972.6 358 h5.6 v3.6 h-3 l-2.6 2.4 Z" fill="none" stroke="#dcdcdf" stroke-width="0.7"/>
<path d="M991.2 363.6 h6 l-1 -1.6 v-2.6 a2 2 0 0 0 -4 0 v2.6 Z" fill="none" stroke="#dcdcdf" stroke-width="0.7"/><circle cx="996.4" cy="358.2" r="1.3" fill="#dcdcdf"/>
<path d="M736.6 66.6 h5.4 l3.6 3.6 v8.2 h-9 Z M742 66.6 v3.6 h3.6" fill="none" stroke="#a2a2a6" stroke-width="0.9"/><path d="M736.6 69.6 h-3.2 v11 h8.6 v-2.2" fill="none" stroke="#a2a2a6" stroke-width="0.9"/>
<circle cx="745.2" cy="78.6" r="4.6" fill="#0b7ad8"/><text x="745.2" y="80.6" font-size="5.6" font-weight="bold" fill="#fff" text-anchor="middle">1</text>
<circle cx="741.4" cy="102.6" r="4.6" fill="none" stroke="#a2a2a6" stroke-width="1"/><path d="M738.2 106 l-5 5.8" stroke="#a2a2a6" stroke-width="1.1"/>
<circle cx="735.6" cy="131.4" r="1.9" fill="none" stroke="#a2a2a6" stroke-width="0.9"/><circle cx="735.6" cy="142.4" r="1.9" fill="none" stroke="#a2a2a6" stroke-width="0.9"/><circle cx="743.4" cy="134.6" r="1.9" fill="none" stroke="#a2a2a6" stroke-width="0.9"/><path d="M735.6 133.3 v7.2 M743.4 136.5 q0 3 -7.8 4" fill="none" stroke="#a2a2a6" stroke-width="0.9"/>
<path d="M732.6 165.2 h5.8 v5.8 h-5.8 Z M738.4 165.2 v5.8 h5.6 v-5.8 Z M732.6 171 v5.6 h5.8 v-5.6" fill="none" stroke="#a2a2a6" stroke-width="0.9"/><rect x="741" y="161.6" width="5.6" height="5.6" fill="none" stroke="#a2a2a6" stroke-width="0.9"/>
<path d="M737 193.4 h5.4 M738.2 193.4 v4.4 l-4.2 8 h11.4 l-4.2 -8 v-4.4" fill="none" stroke="#a2a2a6" stroke-width="0.9" stroke-linejoin="round"/>
<circle cx="739.6" cy="231.4" r="6.6" fill="none" stroke="#a2a2a6" stroke-width="0.9"/><path d="M737.6 227 v9 M737.6 229.6 l4.6 3.2 -4.6 2.4" fill="none" stroke="#a2a2a6" stroke-width="0.9"/>
<path d="M733.2 267.6 v-9.8 h4.2 l1.2 1.6 h7.6 v8.2 Z M733.2 261.8 h13" fill="none" stroke="#a2a2a6" stroke-width="0.9"/>
<circle cx="739.6" cy="305" r="7" fill="none" stroke="#a2a2a6" stroke-width="0.9"/><circle cx="739.6" cy="302.6" r="2.6" fill="none" stroke="#a2a2a6" stroke-width="0.9"/><path d="M734.8 309.8 q4.8 -6 9.6 0" fill="none" stroke="#a2a2a6" stroke-width="0.9"/>
<g transform="translate(739.6 336.4) scale(0.88)"><path fill="none" stroke="#a2a2a6" stroke-width="1.1" stroke-linejoin="round" d="M-1.5 -7.8 H1.5 L2 -5.6 L3.7 -4.7 L5.9 -5.5 L7.4 -2.9 L5.8 -1.3 V1.3 L7.4 2.9 L5.9 5.5 L3.7 4.7 L2 5.6 L1.5 7.8 H-1.5 L-2 5.6 L-3.7 4.7 L-5.9 5.5 L-7.4 2.9 L-5.8 1.3 V-1.3 L-7.4 -2.9 L-5.9 -5.5 L-3.7 -4.7 L-2 -5.6Z"/><circle r="2.4" fill="none" stroke="#a2a2a6" stroke-width="1.1"/></g>
<rect x="1007" y="51" width="282" height="315" fill="#202124"/>
<rect x="1007" y="51" width="282" height="13" fill="#2b2c2f"/>
<rect x="1033.6" y="53.4" width="70.4" height="10.6" rx="2" fill="#38393d"/>
<circle cx="1014.7" cy="57.4" r="1.9" fill="#4a4b4f"/>
<circle cx="1020.7" cy="57.4" r="1.9" fill="#4a4b4f"/>
<circle cx="1026.6" cy="57.4" r="1.9" fill="#4a4b4f"/>
<circle cx="1040" cy="58.6" r="1.5" fill="none" stroke="#7e7f84" stroke-width="0.5"/>
<text x="1045" y="60.2" font-size="4.4" fill="#c8c8cc">Document</text>
<path d="M1099.2 57.4 l2 2 m0 -2 l-2 2" stroke="#c8c8cc" stroke-width="0.5"/><path d="M1110.4 58.6 h2.8 m-1.4 -1.4 v2.8" stroke="#c8c8cc" stroke-width="0.5"/>
<rect x="1007" y="64" width="282" height="9.8" fill="#38393d"/>
<rect x="1048.6" y="65" width="167.4" height="7.6" rx="3.8" fill="#202124"/>
<path d="M1015.2 68.8 h-3.6 m1.6 -1.6 l-1.6 1.6 1.6 1.6 M1020.6 68.8 h3.6 m-1.6 -1.6 l1.6 1.6 -1.6 1.6" fill="none" stroke="#c0c0c4" stroke-width="0.6"/>
<circle cx="1032" cy="68.8" r="1.6" fill="none" stroke="#c0c0c4" stroke-width="0.6"/><path d="M1039.6 69 l2 -1.8 2 1.8 v2 h-4 Z" fill="none" stroke="#c0c0c4" stroke-width="0.6"/>
<circle cx="1053" cy="68.8" r="1.7" fill="none" stroke="#e0e0e0" stroke-width="0.5"/>
<text x="1057.6" y="70.3" font-size="4" fill="#9a9a9e"><tspan fill="#f0f0f0" font-weight="bold">localhost</tspan>:5500/07%20javascript/ch3/04.html</text>
<path d="M1211.6 67.2 l0.6 1.2 1.3 0.2 -1 0.9 0.3 1.3 -1.2 -0.7 -1.2 0.7 0.3 -1.3 -1 -0.9 1.3 -0.2 Z" fill="none" stroke="#c0c0c4" stroke-width="0.4"/>
<circle cx="1223.4" cy="68.8" r="1.7" fill="#c8d8f0"/>
<circle cx="1233.0" cy="68.8" r="1.7" fill="#b0b0b4"/>
<circle cx="1242.4" cy="68.8" r="1.7" fill="#f0f0f0"/>
<rect x="1247.6" y="65.2" width="28" height="7.2" rx="3.6" fill="#2a2b2e"/><circle cx="1252" cy="68.8" r="2.4" fill="none" stroke="#c0c0c4" stroke-width="0.6"/>
<text x="1257.4" y="70.2" font-size="3.8" fill="#b0b0b4">Incognito</text>
<circle cx="1282.6" cy="67.2" r="0.45" fill="#c0c0c4"/>
<circle cx="1282.6" cy="68.8" r="0.45" fill="#c0c0c4"/>
<circle cx="1282.6" cy="70.4" r="0.45" fill="#c0c0c4"/>
<rect x="1007" y="73.8" width="282" height="66.4" fill="#ffffff"/>
<rect x="1007" y="73.8" width="9" height="66.4" fill="url(#pgsh)"/>
<text x="1010" y="91" font-size="9.2" font-weight="bold" fill="#0a0a0a" font-family="Liberation Serif, serif" textLength="45.6" lengthAdjust="spacing">第一種迴圈</text>
<text x="1058.6" y="91" font-size="9.2" font-weight="bold" fill="#0a0a0a" font-family="Liberation Serif, serif">for(2)</text>
<text x="1083.8" y="91" font-size="9.2" font-weight="bold" fill="#0a0a0a" font-family="Liberation Serif, serif" textLength="96.4" lengthAdjust="spacing">倒著數綿羊也可以呦！</text>
<rect x="1007" y="140.2" width="282" height="11.6" fill="#292a2d"/>
<rect x="1106.4" y="140.2" width="29.4" height="11.6" fill="#000"/>
<text x="1042.9" y="148" font-size="5.5" fill="#c4c4c8" letter-spacing="-0.1">Lighthouse</text>
<text x="1078.8" y="148" font-size="5.5" fill="#c4c4c8" letter-spacing="-0.1">Elements</text>
<text x="1110.8" y="148" font-size="5.5" fill="#f4f4f4" letter-spacing="-0.1">Console</text>
<text x="1140.8" y="148" font-size="5.5" fill="#c4c4c8" letter-spacing="-0.1">Sources</text>
<text x="1170.8" y="148" font-size="5.5" fill="#c4c4c8" letter-spacing="-0.1">Network</text>
<text x="1200.0" y="148" font-size="5.5" fill="#9a9a9e" letter-spacing="-0.1">»</text>
<rect x="1011.4" y="143.8" width="4.6" height="4.6" fill="none" stroke="#8a8b90" stroke-width="0.6" stroke-dasharray="1.2 0.8"/><path d="M1014 146.4 l2.6 2.6" stroke="#8a8b90" stroke-width="0.7"/>
<rect x="1024.2" y="143" width="4.2" height="6.2" fill="none" stroke="#8a8b90" stroke-width="0.6"/><rect x="1022.6" y="145.4" width="3" height="3.8" fill="#292a2d" stroke="#8a8b90" stroke-width="0.6"/>
<path d="M1034.6 143 v6.4" stroke="#4a4b50" stroke-width="0.5"/>
<g transform="translate(1257 146.2) scale(0.36)"><path fill="#9c9da2" d="M-1.5 -7.8 H1.5 L2 -5.6 L3.7 -4.7 L5.9 -5.5 L7.4 -2.9 L5.8 -1.3 V1.3 L7.4 2.9 L5.9 5.5 L3.7 4.7 L2 5.6 L1.5 7.8 H-1.5 L-2 5.6 L-3.7 4.7 L-5.9 5.5 L-7.4 2.9 L-5.8 1.3 V-1.3 L-7.4 -2.9 L-5.9 -5.5 L-3.7 -4.7 L-2 -5.6Z"/><circle r="2.4" fill="#292a2d"/></g>
<circle cx="1269.7" cy="144.4" r="0.5" fill="#9c9da2"/>
<circle cx="1269.7" cy="146.2" r="0.5" fill="#9c9da2"/>
<circle cx="1269.7" cy="148.0" r="0.5" fill="#9c9da2"/>
<path d="M1280 144.2 l4 4 m0 -4 l-4 4" stroke="#9c9da2" stroke-width="0.7"/>
<rect x="1007" y="151.8" width="282" height="11.6" fill="#242528"/>
<path d="M1007 151.8 H1289" stroke="#3a3b3f" stroke-width="0.4"/>
<rect x="1011.2" y="155.2" width="5.4" height="5" fill="none" stroke="#8a8b90" stroke-width="0.6"/><path d="M1013 155.2 v5 M1014.4 157 l1.2 0.8 -1.2 0.8" fill="none" stroke="#8a8b90" stroke-width="0.5"/>
<circle cx="1026.6" cy="157.8" r="2.6" fill="none" stroke="#8a8b90" stroke-width="0.6"/><path d="M1024.8 156 l3.6 3.6" stroke="#8a8b90" stroke-width="0.6"/>
<text x="1038.6" y="159.6" font-size="5.3" fill="#d4d4d8">top</text>
<path d="M1092.2 156.8 h2.8 l-1.4 2 Z" fill="#8a8b90"/>
<path d="M1099.6 153.6 v8.4 M1114.6 153.6 v8.4" stroke="#3e3f44" stroke-width="0.5"/>
<path d="M1103.8 157.8 q3.4 -3.6 6.8 0 q-3.4 3.6 -6.8 0 Z" fill="none" stroke="#8a8b90" stroke-width="0.6"/><circle cx="1107.2" cy="157.8" r="1.1" fill="#8a8b90"/>
<rect x="1118.4" y="153.4" width="64.2" height="8.6" fill="#1f2023" stroke="#4a4b50" stroke-width="0.5"/>
<text x="1121" y="159.6" font-size="5.3" fill="#c4c4c8">Filter</text>
<text x="1186.6" y="159.6" font-size="5.3" fill="#d4d4d8" letter-spacing="-0.1">Default levels</text>
<path d="M1220.6 156.8 h2.8 l-1.4 2 Z" fill="#8a8b90"/>
<g transform="translate(1282 157.8) scale(0.36)"><path fill="#9c9da2" d="M-1.5 -7.8 H1.5 L2 -5.6 L3.7 -4.7 L5.9 -5.5 L7.4 -2.9 L5.8 -1.3 V1.3 L7.4 2.9 L5.9 5.5 L3.7 4.7 L2 5.6 L1.5 7.8 H-1.5 L-2 5.6 L-3.7 4.7 L-5.9 5.5 L-7.4 2.9 L-5.8 1.3 V-1.3 L-7.4 -2.9 L-5.9 -5.5 L-3.7 -4.7 L-2 -5.6Z"/><circle r="2.4" fill="#242528"/></g>
<path d="M1011.6 166.8 l1.6 1.4 -1.6 1.4" fill="none" stroke="#3a6ae0" stroke-width="0.7"/>
<rect x="1006.4" y="51" width="1" height="315" fill="#151517"/>
</g>
<text x="858" y="340.9" font-size="16.2" font-weight="500" fill="#0a0a0a" stroke="#0a0a0a" stroke-width="2.8" stroke-linejoin="round" xml:space="preserve" textLength="298" lengthAdjust="spacing">倒數就要怎麼數呢 第一個條件是初始條件</text><text x="858" y="340.9" font-size="16.2" font-weight="500" fill="#ffffff" stroke="#ffffff" stroke-width="0.45" stroke-linejoin="round" xml:space="preserve" textLength="298" lengthAdjust="spacing">倒數就要怎麼數呢 第一個條件是初始條件</text>
<g><path d="M1243.2 353.4 l1.2 -3.8 2.8 2.2 h2.6 l2.8 -2.2 1.2 3.8 v4.4 q0 4.6 -5.3 4.6 q-5.3 0 -5.3 -4.6 Z" fill="#f29a2a" stroke="#5a3a14" stroke-width="0.5"/><path d="M1244.8 358.2 q0 3.4 3.7 3.4 q3.7 0 3.7 -3.4 q-1.8 -2.2 -3.7 0 q-1.9 -2.2 -3.7 0Z" fill="#fff6e6"/><circle cx="1246.4" cy="356" r="0.65" fill="#2a1a0a"/><circle cx="1250.6" cy="356" r="0.65" fill="#2a1a0a"/>
<text x="1254.2" y="360.8" font-size="9.6" font-weight="bold" fill="#ffe6a8" stroke="#4a3208" stroke-width="1.5" paint-order="stroke" letter-spacing="-0.5">程式柴</text></g>
</svg>
<svg id="pctrl" style="left:0;top:351px" width="582" height="67" viewBox="717 385 582 67" font-family="Liberation Sans, sans-serif">
  <rect x="739.6" y="403" width="425.4" height="1.6" fill="#34353c"/>
  <rect x="739.6" y="402.6" width="126" height="2.4" fill="#3d95ea"/>
  <circle cx="865.8" cy="403.9" r="6" fill="#ffffff"/>
  <rect x="1189.5" y="394" width="94.2" height="19" rx="5" fill="#1b1c1f"/>
  <text x="1193.4" y="408.2" font-size="12.4" fill="#c8c9cd" letter-spacing="2.05">01:49:50:07</text>
  <!-- play / stop / prev / next -->
  <path d="M742.5 421 L755.8 429 L742.5 437Z" fill="none" stroke="#c9c9cc" stroke-width="1.1" stroke-linejoin="round"/>
  <rect x="776.6" y="422.4" width="13" height="13.2" fill="none" stroke="#c9c9cc" stroke-width="1.1"/>
  <path d="M823 421 L810 429 L823 437Z" fill="none" stroke="#c9c9cc" stroke-width="1.1" stroke-linejoin="round"/>
  <path d="M826.4 420.6 V437.4" stroke="#c9c9cc" stroke-width="1.2"/>
  <path d="M841.8 420.6 V437.4" stroke="#c9c9cc" stroke-width="1.2"/>
  <path d="M845.4 421 L858.4 429 L845.4 437Z" fill="none" stroke="#c9c9cc" stroke-width="1.1" stroke-linejoin="round"/>
  <!-- camera -->
  <path d="M1091.4 424.6 H1095.6 L1097 422.6 H1102.8 L1104.2 424.6 H1108.6 V436.6 H1091.4Z" fill="none" stroke="#c9c9cc" stroke-width="1.05" stroke-linejoin="round"/>
  <circle cx="1100" cy="430.4" r="3.3" fill="none" stroke="#c9c9cc" stroke-width="1.05"/>
  <!-- speed play -->
  <circle cx="1131.8" cy="431.3" r="6.1" fill="#c9c9cc"/>
  <path d="M1129.8 428 L1135.4 431.3 L1129.8 434.6Z" fill="#171819"/>
  <g stroke="#8c8d92" stroke-width="1.3" fill="none">
    <path d="M1122 433.4 L1120.4 433.8"/><path d="M1121.8 429.4 L1120.2 429"/><path d="M1123.2 425.6 L1121.8 424.6"/><path d="M1126 422.8 L1125.2 421.4"/>
  </g>
  <g stroke="#c9c9cc" stroke-width="1.4" fill="none">
    <path d="M1129.8 421.6 L1129.4 420"/><path d="M1133.8 421.6 L1134.2 420"/><path d="M1137.6 423 L1138.6 421.6"/><path d="M1140.4 425.8 L1141.8 424.8"/><path d="M1141.8 429.4 L1143.6 429"/><path d="M1142 433.4 L1143.8 433.8"/>
  </g>
  <!-- list -->
  <rect x="1155.4" y="422.4" width="17.4" height="14.2" fill="none" stroke="#c9c9cc" stroke-width="1.05"/>
  <path d="M1158.4 427 H1160 M1162 427 H1170 M1158.4 432 H1160 M1162 432 H1170" stroke="#c9c9cc" stroke-width="1.2"/>
  <!-- zoom -->
  <path d="M1187.4 423.6 V420.4 H1190.8 M1201.4 420.4 H1204.8 V423.6 M1204.8 434 V437.4 H1201.4 M1190.8 437.4 H1187.4 V434" fill="none" stroke="#9a9ba0" stroke-width="1.1"/>
  <circle cx="1195.2" cy="428" r="4.3" fill="none" stroke="#c9c9cc" stroke-width="1.4"/>
  <path d="M1198.2 431.2 L1201.8 435" stroke="#c9c9cc" stroke-width="1.6"/>
  <!-- expand -->
  <path d="M1220 421.8 L1233.6 435.6 M1233.6 421.8 L1220 435.6" stroke="#c9c9cc" stroke-width="1.05"/>
  <path d="M1219.6 426 V421.4 H1224.2 M1229.4 421.4 H1234 V426 M1234 431.4 V436 H1229.4 M1224.2 436 H1219.6 V431.4" fill="none" stroke="#c9c9cc" stroke-width="1.05"/>
  <!-- aspect -->
  <rect x="1248.5" y="421.5" width="27.4" height="12.4" rx="1.2" fill="none" stroke="#c9c9cc" stroke-width="1.05"/>
  <text x="1262.2" y="431.2" font-size="9.4" fill="#c9c9cc" text-anchor="middle" letter-spacing="-0.2">16:9</text>
</svg>
</div>

<!-- ============ TIMELINE ============ -->
<div id="tl">
<svg style="left:0;top:0" width="1290" height="349" viewBox="7 459 1290 349" font-family="Liberation Sans, sans-serif">
<rect x="7" y="459" width="1290" height="33.6" fill="#27272b"/>
<rect x="7" y="492.6" width="1290" height="1.2" fill="#0c0c0e"/>
<rect x="7" y="493.8" width="1290" height="300" fill="#17181a"/>
<rect x="131.4" y="493.8" width="1166" height="50.2" fill="#191a1a"/>
<rect x="23.9" y="467.7" width="18.4" height="18.4" fill="none" stroke="#8f9098" stroke-width="1.5"/>
<path d="M26.6 471.2 H28.8 M31 471.2 H35.2 M37.4 471.2 H39.6 M26.6 476.9 H28 M38.2 476.9 H39.6 M26.6 482.6 H28.8 M37.4 482.6 H39.6" stroke="#8f9098" stroke-width="1.4"/>
<rect x="30.2" y="474.4" width="5.8" height="3.4" fill="none" stroke="#8f9098" stroke-width="1.3"/><path d="M33.1 478 V484.8" stroke="#8f9098" stroke-width="1.4"/>
<rect x="55.8" y="469" width="0.8" height="15" fill="#45464c"/>
<rect x="113.8" y="469" width="0.8" height="15" fill="#45464c"/>
<path d="M74.6 484.4 H95.6" stroke="#8f9098" stroke-width="1.5"/>
<path d="M75.4 484 L81.6 478.8 L85.6 482.2 L80 484Z" fill="#8f9098"/>
<path d="M81.2 478.2 L90 469.2 Q92.6 467 94.8 469.2 Q96.6 471.4 94.6 473.6 L85.6 482.4" fill="none" stroke="#8f9098" stroke-width="1.4"/>
<circle cx="86.2" cy="477.2" r="0.9" fill="#8f9098"/>
<rect x="11.5" y="498.4" width="31.2" height="27.2" rx="8" fill="#2f2f33" stroke="#3c3d43" stroke-width="1"/>
<rect x="49.5" y="498.4" width="31.2" height="27.2" rx="8" fill="#2f2f33" stroke="#3c3d43" stroke-width="1"/>
<rect x="87.4" y="498.4" width="31.2" height="27.2" rx="8" fill="#33353d" stroke="#2f8de8" stroke-width="1"/>
<path d="M28 518.5 H19 V505.5 H35.1 V511" fill="none" stroke="#8d8e96" stroke-width="1.5"/>
<path d="M21 508.6 H33.4 M21 515.4 H26.6" stroke="#8d8e96" stroke-width="1.1" stroke-dasharray="2.4 1.3"/>
<circle cx="32.5" cy="516.6" r="4.2" fill="#2f2f33" stroke="#8d8e96" stroke-width="1"/><path d="M30.2 516.6 H34.8 M32.5 514.3 V518.9" stroke="#8d8e96" stroke-width="1"/>
<path d="M56 508.9 L61.2 512.1 L56 515.3Z M74 508.9 L68.8 512.1 L74 515.3Z" fill="#8d8e96"/>
<path d="M56 512.1 H74" stroke="#8d8e96" stroke-width="0.9"/><path d="M63.6 508.4 V515.8 M66.3 508.4 V515.8" stroke="#8d8e96" stroke-width="1.1"/>
<rect x="95" y="505.2" width="13" height="8.4" rx="4.2" fill="none" stroke="#3d95ea" stroke-width="1.45"/>
<rect x="98.2" y="510.2" width="13" height="8.4" rx="4.2" fill="none" stroke="#3d95ea" stroke-width="1.45"/>
<rect x="130.9" y="532" width="1.1" height="12" fill="#a9abc2"/>
<rect x="170.8" y="536" width="1" height="8" fill="#9799ae"/>
<rect x="210.7" y="536" width="1" height="8" fill="#9799ae"/>
<rect x="250.6" y="536" width="1" height="8" fill="#9799ae"/>
<rect x="290.5" y="536" width="1" height="8" fill="#9799ae"/>
<rect x="330.4" y="532" width="1.1" height="12" fill="#a9abc2"/>
<rect x="370.2" y="536" width="1" height="8" fill="#9799ae"/>
<rect x="410.1" y="536" width="1" height="8" fill="#9799ae"/>
<rect x="450.0" y="536" width="1" height="8" fill="#9799ae"/>
<rect x="489.9" y="536" width="1" height="8" fill="#9799ae"/>
<rect x="529.8" y="532" width="1.1" height="12" fill="#a9abc2"/>
<rect x="569.7" y="536" width="1" height="8" fill="#9799ae"/>
<rect x="609.6" y="536" width="1" height="8" fill="#9799ae"/>
<rect x="649.5" y="536" width="1" height="8" fill="#9799ae"/>
<rect x="689.4" y="536" width="1" height="8" fill="#9799ae"/>
<rect x="729.2" y="532" width="1.1" height="12" fill="#a9abc2"/>
<rect x="769.1" y="536" width="1" height="8" fill="#9799ae"/>
<rect x="809.0" y="536" width="1" height="8" fill="#9799ae"/>
<rect x="848.9" y="536" width="1" height="8" fill="#9799ae"/>
<rect x="888.8" y="536" width="1" height="8" fill="#9799ae"/>
<rect x="928.7" y="532" width="1.1" height="12" fill="#a9abc2"/>
<rect x="968.6" y="536" width="1" height="8" fill="#9799ae"/>
<rect x="1008.5" y="536" width="1" height="8" fill="#9799ae"/>
<rect x="1048.4" y="536" width="1" height="8" fill="#9799ae"/>
<rect x="1088.3" y="536" width="1" height="8" fill="#9799ae"/>
<rect x="1128.2" y="532" width="1.1" height="12" fill="#a9abc2"/>
<rect x="1168.0" y="536" width="1" height="8" fill="#9799ae"/>
<rect x="1207.9" y="536" width="1" height="8" fill="#9799ae"/>
<rect x="1247.8" y="536" width="1" height="8" fill="#9799ae"/>
<text x="131.6" y="524.9" font-size="12" font-weight="bold" fill="#c6cce2" letter-spacing="0.2">0:00</text>
<text x="296.4" y="524.9" font-size="12" font-weight="bold" fill="#c6cce2" letter-spacing="0.2">02:05:00:00</text>
<text x="496.0" y="524.9" font-size="12" font-weight="bold" fill="#c6cce2" letter-spacing="0.2">04:10:00:00</text>
<text x="695.2" y="524.9" font-size="12" font-weight="bold" fill="#c6cce2" letter-spacing="0.2">06:15:00:00</text>
<text x="894.8" y="524.9" font-size="12" font-weight="bold" fill="#c6cce2" letter-spacing="0.2">08:20:00:00</text>
<text x="1094.0" y="524.9" font-size="12" font-weight="bold" fill="#c6cce2" letter-spacing="0.2">10:25:00:00</text>
<rect x="9" y="544" width="118" height="81.2" fill="#32353d"/>
<rect x="131.4" y="544" width="1148.6" height="81.2" fill="#32353d"/>
<rect x="9" y="625.2" width="118" height="1" fill="#3e414b"/>
<rect x="131.4" y="625.2" width="1148.6" height="1" fill="#3e414b"/>
<rect x="9" y="626.2" width="118" height="161.6" fill="#1b1c20"/>
<rect x="131.4" y="626.2" width="1148.6" height="161.6" fill="#191919"/>
<rect x="127" y="544" width="4.4" height="244" fill="#050506"/>
<path d="M9 594.5 H127 M131.4 594.5 H1280" stroke="#101114" stroke-width="1" stroke-dasharray="1 1.6"/>
<path d="M9 676.4 H127 M131.4 676.4 H1280" stroke="#3a3b42" stroke-width="1" stroke-dasharray="1 1.6"/>
<path d="M9 758.4 H127 M131.4 758.4 H1280" stroke="#3a3b42" stroke-width="1" stroke-dasharray="1 1.6"/>
<path d="M9 707.5 H127 M131.4 707.5 H1280" stroke="#3b3d45" stroke-width="1"/>
<text x="24.6" y="572.2" font-size="10.5" fill="#d6d7de" text-anchor="middle">1</text>
<rect x="37.2" y="564.9" width="11.8" height="8.2" rx="1.4" fill="#8a8b8f"/><path d="M49 567.8 L52.6 565.6 V572.4 L49 570.2 Z" fill="#8a8b8f"/>
<path d="M70 568.0 Q77.2 558.4 84.4 568.0 Q77.2 577.6 70 568.0 Z" fill="none" stroke="#8a8b8f" stroke-width="0.95"/><circle cx="77.2" cy="568.0" r="2.1" fill="none" stroke="#8a8b8f" stroke-width="0.95"/>
<rect x="105.4" y="568.6" width="11" height="7.4" fill="none" stroke="#8a8b8f" stroke-width="1.1"/><circle cx="110.9" cy="572.3" r="0.9" fill="#8a8b8f"/><path d="M111.8 568.6 V565.2 Q111.8 562.2 115 562.2 Q118.2 562.2 118.2 565.2 V566.6" fill="none" stroke="#8a8b8f" stroke-width="1.1"/>
<text x="24.6" y="613.4" font-size="10.5" fill="#d6d7de" text-anchor="middle">1</text>
<path d="M42.4 605.6 L50.8 603.6 V614.0 H49.6 V607.6 L43.6 609.0 V615.4 H42.4 Z" fill="#8a8b8f"/><ellipse cx="41" cy="615.4" rx="2.5" ry="1.9" fill="#8a8b8f"/><ellipse cx="48.4" cy="614.0" rx="2.5" ry="1.9" fill="#8a8b8f"/>
<path d="M70.6 607.8 H73.8 L78.2 604.0 V616.4 L73.8 612.6 H70.6 Z" fill="none" stroke="#8a8b8f" stroke-width="1" stroke-linejoin="round"/><path d="M80.2 608.0 Q81.6 610.2 80.2 612.4 M82.4 606.2 Q85 610.2 82.4 614.2" fill="none" stroke="#8a8b8f" stroke-width="1"/>
<rect x="105.4" y="609.8" width="11" height="7.4" fill="none" stroke="#8a8b8f" stroke-width="1.1"/><circle cx="110.9" cy="613.5" r="0.9" fill="#8a8b8f"/><path d="M111.8 609.8 V606.4 Q111.8 603.4 115 603.4 Q118.2 603.4 118.2 606.4 V607.8" fill="none" stroke="#8a8b8f" stroke-width="1.1"/>
<text x="24.6" y="654.6" font-size="10.5" fill="#d6d7de" text-anchor="middle">2</text>
<rect x="37.2" y="647.3" width="11.8" height="8.2" rx="1.4" fill="#8a8b8f"/><path d="M49 650.2 L52.6 648.0 V654.8 L49 652.6 Z" fill="#8a8b8f"/>
<path d="M70 650.4 Q77.2 640.8 84.4 650.4 Q77.2 660.0 70 650.4 Z" fill="none" stroke="#8a8b8f" stroke-width="0.95"/><circle cx="77.2" cy="650.4" r="2.1" fill="none" stroke="#8a8b8f" stroke-width="0.95"/>
<rect x="105.4" y="651.0" width="11" height="7.4" fill="none" stroke="#8a8b8f" stroke-width="1.1"/><circle cx="110.9" cy="654.7" r="0.9" fill="#8a8b8f"/><path d="M111.8 651.0 V647.6 Q111.8 644.6 115 644.6 Q118.2 644.6 118.2 647.6 V649.0" fill="none" stroke="#8a8b8f" stroke-width="1.1"/>
<text x="24.6" y="695.6" font-size="10.5" fill="#d6d7de" text-anchor="middle">2</text>
<path d="M42.4 687.8 L50.8 685.8 V696.2 H49.6 V689.8 L43.6 691.2 V697.6 H42.4 Z" fill="#8a8b8f"/><ellipse cx="41" cy="697.6" rx="2.5" ry="1.9" fill="#8a8b8f"/><ellipse cx="48.4" cy="696.2" rx="2.5" ry="1.9" fill="#8a8b8f"/>
<path d="M70.6 690.0 H73.8 L78.2 686.2 V698.6 L73.8 694.8 H70.6 Z" fill="none" stroke="#8a8b8f" stroke-width="1" stroke-linejoin="round"/><path d="M80.2 690.2 Q81.6 692.4 80.2 694.6 M82.4 688.4 Q85 692.4 82.4 696.4" fill="none" stroke="#8a8b8f" stroke-width="1"/>
<rect x="105.4" y="692.0" width="11" height="7.4" fill="none" stroke="#8a8b8f" stroke-width="1.1"/><circle cx="110.9" cy="695.7" r="0.9" fill="#8a8b8f"/><path d="M111.8 692.0 V688.6 Q111.8 685.6 115 685.6 Q118.2 685.6 118.2 688.6 V690.0" fill="none" stroke="#8a8b8f" stroke-width="1.1"/>
<text x="24.6" y="736.4" font-size="10.5" fill="#d6d7de" text-anchor="middle">3</text>
<rect x="37.2" y="729.1" width="11.8" height="8.2" rx="1.4" fill="#8a8b8f"/><path d="M49 732.0 L52.6 729.8 V736.6 L49 734.4 Z" fill="#8a8b8f"/>
<path d="M70 732.2 Q77.2 722.6 84.4 732.2 Q77.2 741.8 70 732.2 Z" fill="none" stroke="#8a8b8f" stroke-width="0.95"/><circle cx="77.2" cy="732.2" r="2.1" fill="none" stroke="#8a8b8f" stroke-width="0.95"/>
<rect x="105.4" y="732.8" width="11" height="7.4" fill="none" stroke="#8a8b8f" stroke-width="1.1"/><circle cx="110.9" cy="736.5" r="0.9" fill="#8a8b8f"/><path d="M111.8 732.8 V729.4 Q111.8 726.4 115 726.4 Q118.2 726.4 118.2 729.4 V730.8" fill="none" stroke="#8a8b8f" stroke-width="1.1"/>
<text x="24.6" y="777.6" font-size="10.5" fill="#d6d7de" text-anchor="middle">3</text>
<path d="M42.4 769.8 L50.8 767.8 V778.2 H49.6 V771.8 L43.6 773.2 V779.6 H42.4 Z" fill="#8a8b8f"/><ellipse cx="41" cy="779.6" rx="2.5" ry="1.9" fill="#8a8b8f"/><ellipse cx="48.4" cy="778.2" rx="2.5" ry="1.9" fill="#8a8b8f"/>
<path d="M70.6 772.0 H73.8 L78.2 768.2 V780.6 L73.8 776.8 H70.6 Z" fill="none" stroke="#8a8b8f" stroke-width="1" stroke-linejoin="round"/><path d="M80.2 772.2 Q81.6 774.4 80.2 776.6 M82.4 770.4 Q85 774.4 82.4 778.4" fill="none" stroke="#8a8b8f" stroke-width="1"/>
<rect x="105.4" y="774.0" width="11" height="7.4" fill="none" stroke="#8a8b8f" stroke-width="1.1"/><circle cx="110.9" cy="777.7" r="0.9" fill="#8a8b8f"/><path d="M111.8 774.0 V770.6 Q111.8 767.6 115 767.6 Q118.2 767.6 118.2 770.6 V772.0" fill="none" stroke="#8a8b8f" stroke-width="1.1"/>
<rect x="131.8" y="546.4" width="590.6" height="76" rx="3.2" fill="#95690f" stroke="#241804" stroke-width="0.9"/>
<rect x="134" y="564.3" width="587" height="2.4" fill="#f3f3f3"/>
<g>
<rect x="132.4" y="566.7" width="588.6" height="24.2" fill="#1d1d21"/>
<rect x="132.4" y="566.7" width="47.4" height="24.2" fill="#b9b8b5"/>
<rect x="140" y="566.7" width="10" height="16" fill="#2b2b2e"/>
<path d="M139 590.9 Q140 584 146 582.6 L150 581 H158 L162 583.4 Q165 585 165.6 590.9Z" fill="#1b1c20"/>
<ellipse cx="154" cy="578.6" rx="4.2" ry="5.2" fill="#b0876c"/>
<path d="M149.6 576 Q150 570.6 155 570.6 Q159.4 570.6 159.8 575.4 Q154.6 572.8 149.6 576Z" fill="#a39675"/>
<ellipse cx="166.4" cy="584.6" rx="3.8" ry="6.2" fill="#151619"/>
<path d="M164.6 579.6 Q163.6 570 169 567" fill="none" stroke="#121214" stroke-width="0.8"/>
<path d="M165.6 575.4 Q170 570.4 177.4 571.8 L178 574.4 Q171 573.6 167.4 577.4Z" fill="#111114"/>
<rect x="170.8" y="574.6" width="7" height="16.3" rx="2.8" fill="#17181c"/>
<rect x="143.4" y="588.2" width="25" height="1" fill="#d8d8d8" opacity="0.6"/>
<rect x="179.8" y="566.7" width="48.2" height="24.2" fill="#1e1e22"/><rect x="179.8" y="566.7" width="2.6" height="24.2" fill="#2e2e32"/><rect x="184.8" y="570.0" width="9.0" height="0.8" fill="#7a3a4a" opacity="0.85"/><rect x="186.3" y="572.3" width="12.0" height="0.8" fill="#3a6a8a" opacity="0.85"/><rect x="186.3" y="574.6" width="8.0" height="0.8" fill="#8a7a3a" opacity="0.85"/><rect x="187.8" y="576.9" width="11.0" height="0.8" fill="#7a3a4a" opacity="0.85"/><rect x="187.8" y="579.2" width="7.0" height="0.8" fill="#3a6a8a" opacity="0.85"/><rect x="186.3" y="581.5" width="10.0" height="0.8" fill="#6a6a6e" opacity="0.85"/><rect x="184.8" y="583.8" width="6.0" height="0.8" fill="#7a3a4a" opacity="0.85"/><rect x="204.2" y="567.4" width="24.0" height="12.2" fill="#f6f6f8"/><rect x="191.8" y="588.4" width="26.2" height="1" fill="#cfcfd2" opacity="0.55"/><rect x="204.2" y="567.2" width="24" height="1.2" fill="#3a4ad0"/><rect x="204.2" y="579.6" width="24" height="11.3" fill="#0d0d0f"/>
<rect x="228.2" y="566.7" width="48.6" height="24.2" fill="#2a2a2e"/><rect x="228.2" y="566.7" width="22" height="24.2" fill="#34343a"/><circle cx="239.6" cy="570.4" r="1.4" fill="#d8d8dc"/><rect x="233" y="574" width="13" height="0.8" fill="#8a8a90"/><rect x="233" y="576.2" width="15" height="0.8" fill="#6a6a70"/><rect x="233" y="578.4" width="9" height="0.8" fill="#4a7ab0"/><rect x="240" y="588.4" width="22" height="1" fill="#cfcfd2" opacity="0.5"/>
<rect x="276.8" y="566.7" width="48.0" height="24.2" fill="#1e1e22"/><rect x="276.8" y="566.7" width="2.6" height="24.2" fill="#2e2e32"/><rect x="281.8" y="570.0" width="9.0" height="0.8" fill="#7a3a4a" opacity="0.85"/><rect x="283.3" y="572.3" width="12.0" height="0.8" fill="#3a6a8a" opacity="0.85"/><rect x="283.3" y="574.6" width="8.0" height="0.8" fill="#8a7a3a" opacity="0.85"/><rect x="284.8" y="576.9" width="11.0" height="0.8" fill="#7a3a4a" opacity="0.85"/><rect x="284.8" y="579.2" width="7.0" height="0.8" fill="#3a6a8a" opacity="0.85"/><rect x="283.3" y="581.5" width="10.0" height="0.8" fill="#6a6a6e" opacity="0.85"/><rect x="281.8" y="583.8" width="6.0" height="0.8" fill="#7a3a4a" opacity="0.85"/><rect x="299.8" y="567.2" width="24.0" height="5.8" fill="#f6f6f8"/><rect x="288.8" y="588.4" width="26.0" height="1" fill="#cfcfd2" opacity="0.55"/>
<rect x="324.8" y="566.7" width="48.0" height="24.2" fill="#1e1e22"/><rect x="324.8" y="566.7" width="2.6" height="24.2" fill="#2e2e32"/><rect x="329.8" y="570.0" width="9.0" height="0.8" fill="#7a3a4a" opacity="0.85"/><rect x="331.3" y="572.3" width="12.0" height="0.8" fill="#3a6a8a" opacity="0.85"/><rect x="331.3" y="574.6" width="8.0" height="0.8" fill="#8a7a3a" opacity="0.85"/><rect x="332.8" y="576.9" width="11.0" height="0.8" fill="#7a3a4a" opacity="0.85"/><rect x="332.8" y="579.2" width="7.0" height="0.8" fill="#3a6a8a" opacity="0.85"/><rect x="331.3" y="581.5" width="10.0" height="0.8" fill="#6a6a6e" opacity="0.85"/><rect x="329.8" y="583.8" width="6.0" height="0.8" fill="#7a3a4a" opacity="0.85"/><rect x="348.0" y="567.2" width="24.2" height="23.7" fill="#f6f6f8"/><rect x="336.8" y="588.4" width="26.0" height="1" fill="#cfcfd2" opacity="0.55"/><rect x="350" y="570" width="14" height="0.8" fill="#8a8a90"/><rect x="350" y="573" width="18" height="0.8" fill="#a0a0a6"/><rect x="350" y="576" width="10" height="0.8" fill="#a0a0a6"/><rect x="350" y="579" width="12" height="0.8" fill="#b0b0b6"/>
<rect x="372.8" y="566.7" width="48.2" height="24.2" fill="#1e1e22"/><rect x="372.8" y="566.7" width="2.6" height="24.2" fill="#2e2e32"/><rect x="377.8" y="570.0" width="9.0" height="0.8" fill="#7a3a4a" opacity="0.85"/><rect x="379.3" y="572.3" width="12.0" height="0.8" fill="#3a6a8a" opacity="0.85"/><rect x="379.3" y="574.6" width="8.0" height="0.8" fill="#8a7a3a" opacity="0.85"/><rect x="380.8" y="576.9" width="11.0" height="0.8" fill="#7a3a4a" opacity="0.85"/><rect x="380.8" y="579.2" width="7.0" height="0.8" fill="#3a6a8a" opacity="0.85"/><rect x="379.3" y="581.5" width="10.0" height="0.8" fill="#6a6a6e" opacity="0.85"/><rect x="377.8" y="583.8" width="6.0" height="0.8" fill="#7a3a4a" opacity="0.85"/><rect x="395.6" y="567.2" width="24.2" height="4.8" fill="#f6f6f8"/><rect x="384.8" y="588.4" width="26.2" height="1" fill="#cfcfd2" opacity="0.55"/>
<rect x="421.0" y="566.7" width="48.0" height="24.2" fill="#1e1e22"/><rect x="421.0" y="566.7" width="2.6" height="24.2" fill="#2e2e32"/><rect x="426.0" y="570.0" width="9.0" height="0.8" fill="#7a3a4a" opacity="0.85"/><rect x="427.5" y="572.3" width="12.0" height="0.8" fill="#3a6a8a" opacity="0.85"/><rect x="427.5" y="574.6" width="8.0" height="0.8" fill="#8a7a3a" opacity="0.85"/><rect x="429.0" y="576.9" width="11.0" height="0.8" fill="#7a3a4a" opacity="0.85"/><rect x="429.0" y="579.2" width="7.0" height="0.8" fill="#3a6a8a" opacity="0.85"/><rect x="427.5" y="581.5" width="10.0" height="0.8" fill="#6a6a6e" opacity="0.85"/><rect x="426.0" y="583.8" width="6.0" height="0.8" fill="#7a3a4a" opacity="0.85"/><rect x="444.0" y="567.2" width="24.2" height="4.8" fill="#f6f6f8"/><rect x="433.0" y="588.4" width="26.0" height="1" fill="#cfcfd2" opacity="0.55"/>
<rect x="469.0" y="566.7" width="48.0" height="24.2" fill="#1e1e22"/><rect x="469.0" y="566.7" width="2.6" height="24.2" fill="#2e2e32"/><rect x="474.0" y="570.0" width="9.0" height="0.8" fill="#7a3a4a" opacity="0.85"/><rect x="475.5" y="572.3" width="12.0" height="0.8" fill="#3a6a8a" opacity="0.85"/><rect x="475.5" y="574.6" width="8.0" height="0.8" fill="#8a7a3a" opacity="0.85"/><rect x="477.0" y="576.9" width="11.0" height="0.8" fill="#7a3a4a" opacity="0.85"/><rect x="477.0" y="579.2" width="7.0" height="0.8" fill="#3a6a8a" opacity="0.85"/><rect x="475.5" y="581.5" width="10.0" height="0.8" fill="#6a6a6e" opacity="0.85"/><rect x="474.0" y="583.8" width="6.0" height="0.8" fill="#7a3a4a" opacity="0.85"/><rect x="492.0" y="567.2" width="24.2" height="4.8" fill="#f6f6f8"/><rect x="481.0" y="588.4" width="26.0" height="1" fill="#cfcfd2" opacity="0.55"/>
<rect x="517.0" y="566.7" width="48.0" height="24.2" fill="#1e1e22"/><rect x="517.0" y="566.7" width="2.6" height="24.2" fill="#2e2e32"/><rect x="522.0" y="570.0" width="9.0" height="0.8" fill="#7a3a4a" opacity="0.85"/><rect x="523.5" y="572.3" width="12.0" height="0.8" fill="#3a6a8a" opacity="0.85"/><rect x="523.5" y="574.6" width="8.0" height="0.8" fill="#8a7a3a" opacity="0.85"/><rect x="525.0" y="576.9" width="11.0" height="0.8" fill="#7a3a4a" opacity="0.85"/><rect x="525.0" y="579.2" width="7.0" height="0.8" fill="#3a6a8a" opacity="0.85"/><rect x="523.5" y="581.5" width="10.0" height="0.8" fill="#6a6a6e" opacity="0.85"/><rect x="522.0" y="583.8" width="6.0" height="0.8" fill="#7a3a4a" opacity="0.85"/><rect x="540.0" y="567.2" width="25.0" height="10.4" fill="#f6f6f8"/><rect x="529.0" y="588.4" width="26.0" height="1" fill="#cfcfd2" opacity="0.55"/>
<rect x="565" y="566.7" width="48" height="24.2" fill="#1e1e22"/><rect x="564.8" y="567.2" width="23.4" height="23.7" fill="#eef3f8"/><rect x="564.8" y="567.2" width="23.4" height="2.4" fill="#a8d0f0"/><rect x="567" y="572" width="10" height="0.8" fill="#9a9aa0"/><rect x="567" y="576" width="8" height="1" fill="#3a3a40"/><rect x="567" y="580" width="16" height="0.8" fill="#b0b0b6"/><rect x="567" y="583" width="16" height="0.8" fill="#c0c0c6"/><rect x="580" y="588" width="6" height="1.6" fill="#3a3a40"/><rect x="588.2" y="567.2" width="24" height="10" fill="#f6f6f8"/><rect x="590" y="588.4" width="18" height="1" fill="#cfcfd2" opacity="0.5"/>
<rect x="613.0" y="566.7" width="48.0" height="24.2" fill="#1e1e22"/><rect x="613.0" y="566.7" width="2.6" height="24.2" fill="#2e2e32"/><rect x="618.0" y="570.0" width="9.0" height="0.8" fill="#7a3a4a" opacity="0.85"/><rect x="619.5" y="572.3" width="12.0" height="0.8" fill="#3a6a8a" opacity="0.85"/><rect x="619.5" y="574.6" width="8.0" height="0.8" fill="#8a7a3a" opacity="0.85"/><rect x="621.0" y="576.9" width="11.0" height="0.8" fill="#7a3a4a" opacity="0.85"/><rect x="621.0" y="579.2" width="7.0" height="0.8" fill="#3a6a8a" opacity="0.85"/><rect x="619.5" y="581.5" width="10.0" height="0.8" fill="#6a6a6e" opacity="0.85"/><rect x="618.0" y="583.8" width="6.0" height="0.8" fill="#7a3a4a" opacity="0.85"/><rect x="635.6" y="567.2" width="25.0" height="12.0" fill="#f6f6f8"/><rect x="625.0" y="588.4" width="26.0" height="1" fill="#cfcfd2" opacity="0.55"/><rect x="635.6" y="579.2" width="25" height="1.8" fill="#7a1a22"/>
<rect x="661.0" y="566.7" width="48.2" height="24.2" fill="#1e1e22"/><rect x="661.0" y="566.7" width="2.6" height="24.2" fill="#2e2e32"/><rect x="666.0" y="570.0" width="9.0" height="0.8" fill="#7a3a4a" opacity="0.85"/><rect x="667.5" y="572.3" width="12.0" height="0.8" fill="#3a6a8a" opacity="0.85"/><rect x="667.5" y="574.6" width="8.0" height="0.8" fill="#8a7a3a" opacity="0.85"/><rect x="669.0" y="576.9" width="11.0" height="0.8" fill="#7a3a4a" opacity="0.85"/><rect x="669.0" y="579.2" width="7.0" height="0.8" fill="#3a6a8a" opacity="0.85"/><rect x="667.5" y="581.5" width="10.0" height="0.8" fill="#6a6a6e" opacity="0.85"/><rect x="666.0" y="583.8" width="6.0" height="0.8" fill="#7a3a4a" opacity="0.85"/><rect x="695.0" y="567.2" width="13.0" height="11.0" fill="#f6f6f8"/><rect x="673.0" y="588.4" width="26.2" height="1" fill="#cfcfd2" opacity="0.55"/><rect x="696.6" y="573.6" width="3" height="3" fill="#f02020"/><rect x="699.8" y="573.6" width="3" height="3" fill="#f0e020"/><rect x="703" y="573.6" width="3" height="3" fill="#20a030"/><rect x="695" y="580" width="12" height="0.8" fill="#2a6ad0"/><rect x="695" y="582.4" width="9" height="0.8" fill="#2a6ad0"/>
<rect x="709.2" y="566.7" width="11.8" height="24.2" fill="#1e1e22"/><rect x="711" y="570" width="6" height="0.8" fill="#3a6a8a"/><rect x="711" y="573" width="8" height="0.8" fill="#3a6a8a"/><rect x="711" y="576" width="5" height="0.8" fill="#7a3a4a"/>
</g>
<rect x="134" y="611.3" width="587" height="1.9" fill="#dcc795"/>
<rect x="134" y="613.4" width="587" height="0.8" fill="#2c1f07"/>
<rect x="136.6" y="553" width="8.4" height="6.4" rx="0.8" fill="none" stroke="#e8dcc0" stroke-width="1"/><path d="M145.4 555.2 L149.2 552.8 V559.6 L145.4 557.2" fill="none" stroke="#e8dcc0" stroke-width="1"/>
<text x="155.6" y="560" font-size="11" fill="#f2ead8" textLength="325.4" lengthAdjust="spacing">【 JavaScript 】 6 小時初學者課程 #javascript教學 #javascript入門 #js</text>
<rect x="305.6" y="505" width="1.5" height="283" fill="#cf2525"/>
<path d="M299.8 498.4 Q299.8 496.4 301.8 496.4 H310.2 Q312.2 496.4 312.2 498.4 V503.2 L306.3 509.2 L299.8 503.2 Z" fill="#d42222"/>
<rect x="1285" y="541" width="7.6" height="247" rx="3.6" fill="#2b2c36"/>
<rect x="1285" y="541" width="7.6" height="202.6" rx="3.6" fill="#4a4c5b"/>
<rect x="7" y="787.8" width="1290" height="5" fill="#191a1b"/>
<rect x="7" y="792.6" width="1290" height="1.4" fill="#0a0a0c"/>
<rect x="7" y="794" width="1290" height="14" fill="#1d1e23"/>
<circle cx="17.5" cy="806.5" r="5.5" fill="#cdcdd0"/><rect x="14.2" y="805.6" width="6.6" height="1.6" fill="#1d1e23"/>
<rect x="39" y="806" width="65" height="1" fill="#808187"/>
<circle cx="34.9" cy="806.5" r="5" fill="#cdcdd0"/>
<circle cx="121.6" cy="806.5" r="5.5" fill="#cdcdd0"/><rect x="118.3" y="805.7" width="6.6" height="1.6" fill="#1d1e23"/><rect x="120.8" y="803.2" width="1.6" height="5" fill="#1d1e23"/>
<rect x="131.6" y="802.2" width="1148.6" height="8" rx="3.4" fill="#2b2c36"/>
<rect x="131.6" y="802.2" width="756" height="8" rx="3.4" fill="#4d4f5d"/>
</svg>
</div>
</body>
</html>
